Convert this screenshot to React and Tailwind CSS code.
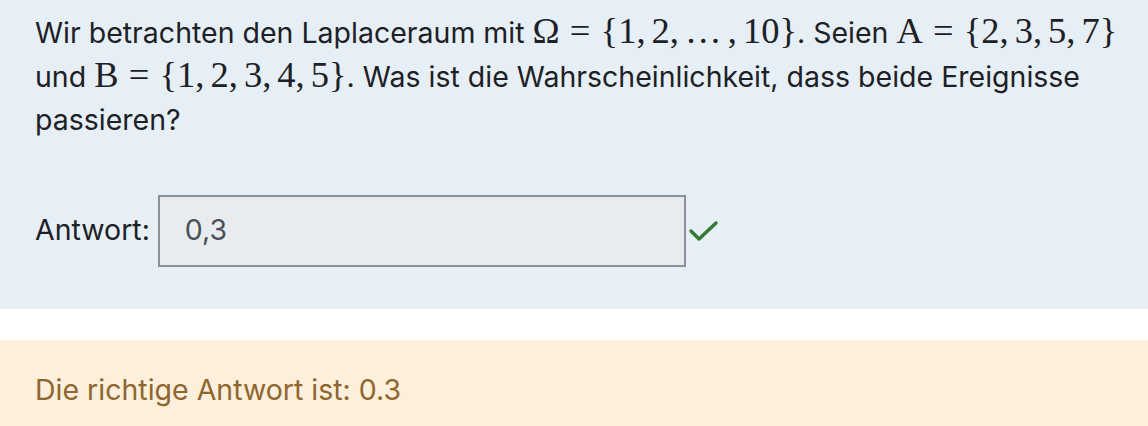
function M({ children }) {
  return (
    <span className="font-['Liberation_Serif',serif] text-[36.5px] leading-none whitespace-nowrap">{children}</span>
  );
}

// comma followed by a thin space, like TeX punctuation
function C() {
  return <span className="mr-[0.167em]">,</span>;
}

function Eq() {
  return <span className="mx-[0.278em]">=</span>;
}

export default function App() {
  return (
    <div className="w-[1148px] h-[426px] overflow-hidden bg-white font-['Inter',sans-serif]">
      <div className="h-[309px] bg-[#e7eff6] pl-[35px] pr-[20px] pt-[11px]">
        <p className="text-[28.5px] leading-[43.5px] text-[#1d2125]">
          Wir betrachten den Laplaceraum mit{" "}
          <M>
            Ω<Eq />{"{"}1<C />2<C />…<span className="mr-[0.167em]" />
            <C />10{"}"}
          </M>
          . Seien{" "}
          <M>
            A<Eq />{"{"}2<C />3<C />5<C />7{"}"}
          </M>{" "}
          und{" "}
          <M>
            B<Eq />{"{"}1<C />2<C />3<C />4<C />5{"}"}
          </M>
          . Was ist die Wahrscheinlichkeit, dass beide Ereignisse passieren?
        </p>

        <div className="mt-[53px] flex items-center">
          <span className="text-[28.5px] text-[#1d2125] mr-[8px]">Antwort:</span>
          <div className="w-[528px] h-[72px] border-2 border-[#8b9097] bg-[#e9ecef] flex items-center px-[25px]">
            <span className="text-[28.5px] text-[#495057]">0,3</span>
          </div>
          <svg width="32" height="24" viewBox="0 0 32 24" className="ml-[1px]">
            <path d="M4 12 L12 20 L29 4" fill="none" stroke="#357a32" strokeWidth="3.5" strokeLinecap="round" strokeLinejoin="round" />
          </svg>
        </div>
      </div>

      <div className="mt-[31px] h-[120px] bg-[#fcefdc] px-[35px] pt-[29px]">
        <p className="text-[28.5px] text-[#8e662e]">Die richtige Antwort ist: 0.3</p>
      </div>
    </div>
  );
}
